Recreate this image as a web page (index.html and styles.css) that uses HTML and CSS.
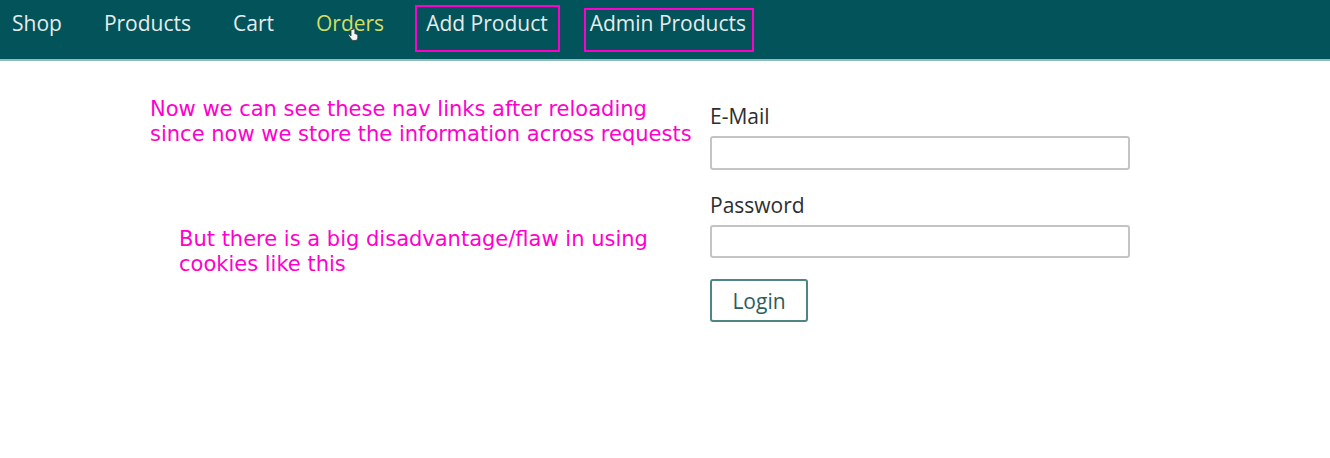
FILE: index.html
```html
<!DOCTYPE html>
<html>
<head>
<meta charset="utf-8">
<link rel="stylesheet" href="styles.css">
</head>
<body>
<header class="topbar">
  <nav class="nav">
    <a class="nav-link">Shop</a>
    <a class="nav-link">Products</a>
    <a class="nav-link">Cart</a>
    <a class="nav-link nav-link--active">Orders<svg class="cursor" width="12" height="14" viewBox="0 0 12 14"><path d="M4 1.5v6.5l-1.2-1.2c-.6-.6-1.6 0-1.1.8l2.6 3.6c.5.7 1.3 1.3 2.4 1.3h1.5c1.6 0 2.6-1.2 2.6-2.8v-3c0-.6-.9-.7-.9 0v-.5c0-.6-1-.7-1 0v-.4c0-.6-1-.7-1 0v-4.3c0-1-1.9-1-1.9 0z" fill="#f4f4f4" stroke="#333" stroke-width=".8"/></svg></a>
    <a class="nav-link">Add Product</a>
    <a class="nav-link">Admin Products</a>
  </nav>
  <span class="mark mark--one"></span>
  <span class="mark mark--two"></span>
</header>
<main class="page">
  <section class="notes">
    <p class="note note--first">Now we can see these nav links after reloading<br>since now we store the information across requests</p>
    <p class="note note--second">But there is a big disadvantage/flaw in using<br>cookies like this</p>
  </section>
  <form class="login">
    <label class="field-label">E-Mail</label>
    <input class="field-input" type="text">
    <label class="field-label field-label--spaced">Password</label>
    <input class="field-input field-input--short" type="password">
    <button class="btn" type="button">Login</button>
  </form>
</main>
</body>
</html>
```
FILE: styles.css
```css
* { box-sizing: border-box; }
html, body { margin: 0; padding: 0; background: #fff; }
body { font-family: "Open Sans", "Liberation Sans", sans-serif; }

.topbar {
  position: relative;
  height: 61px;
  background: #02535a;
  border-bottom: 2px solid #8fbcbc;
}
.nav {
  display: flex;
  gap: 42px;
  padding: 9px 0 0 12px;
}
.nav-link {
  position: relative;
  font-size: 21px;
  line-height: 28px;
  font-weight: 500;
  color: #e4ecec;
  text-decoration: none;
}
.nav-link--active { color: #d3df63; }
.cursor {
  position: absolute;
  left: 31px;
  top: 19px;
}
.mark {
  position: absolute;
  border: 2px solid #ff00cc;
}
.mark--one { left: 415px; top: 5px; width: 145px; height: 47px; }
.mark--two { left: 584px; top: 8px; width: 170px; height: 44px; }

.page {
  display: flex;
}
.notes {
  width: 710px;
  padding-top: 36px;
}
.note {
  margin: 0;
  font-family: "DejaVu Sans", sans-serif;
  font-size: 21px;
  line-height: 25px;
  color: #ff00cc;
}
.note--first { padding-left: 150px; }
.note--second { padding-left: 179px; margin-top: 80px; }

.login {
  display: flex;
  flex-direction: column;
  align-items: flex-start;
  width: 420px;
  padding-top: 41px;
}
.field-label {
  font-size: 21px;
  line-height: 28px;
  color: #2e2e2e;
  margin-bottom: 6px;
}
.field-label--spaced { margin-top: 21px; margin-bottom: 6px; }
.field-input {
  width: 420px;
  height: 34px;
  border: 2px solid #c4c4c4;
  border-radius: 3px;
  background: #fff;
}
.field-input--short { height: 33px; }
.btn {
  margin-top: 21px;
  width: 98px;
  height: 43px;
  border: 2px solid #4f8585;
  border-radius: 3px;
  background: #fff;
  font-family: "Open Sans", sans-serif;
  font-size: 21px;
  color: #2c5d5d;
  padding: 0;
}
```
